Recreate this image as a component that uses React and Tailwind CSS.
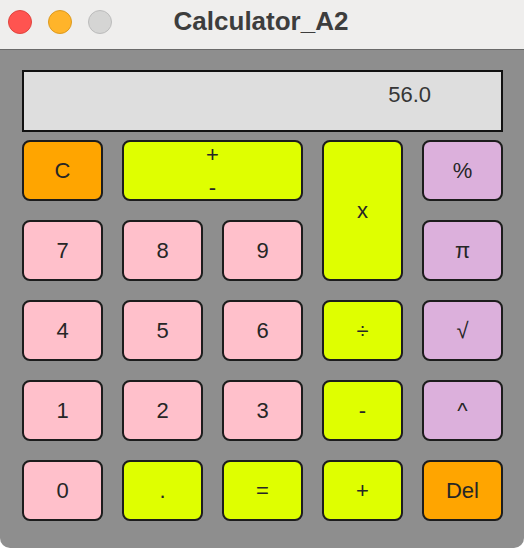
import React from "react";

const PINK = "bg-[#ffc0cb]";
const YEL = "bg-[#dfff00]";
const ORA = "bg-[#ffa500]";
const PUR = "bg-[#dcb0dc]";

function Btn({ label, color, className = "" }) {
  return (
    <div
      className={`${color} ${className} flex items-center justify-center rounded-[8px] border-2 border-[#1c1c1c] text-[22px] text-[#262626]`}
    >
      {label}
    </div>
  );
}

export default function App() {
  return (
    <div
      className="w-[524px] h-[548px] flex flex-col overflow-hidden rounded-b-[10px] bg-[#8e8e8e]"
      style={{ fontFamily: '"Liberation Sans", Arial, sans-serif' }}
    >
      <div className="h-[50px] shrink-0 relative flex items-center justify-center bg-[#efeeed] border-b border-[#6a6a6a]">
        <div className="absolute left-[8px] top-[10px] flex gap-[16px]">
          <div className="w-[24px] h-[24px] rounded-full bg-[#ff5450] border border-[#e0443e]" />
          <div className="w-[24px] h-[24px] rounded-full bg-[#ffb42a] border border-[#dd9a1e]" />
          <div className="w-[24px] h-[24px] rounded-full bg-[#d5d5d4] border border-[#bcbcbc]" />
        </div>
        <div className="text-[26px] font-bold text-[#3d3d3d] mt-[-6px] ml-[-2px]">Calculator_A2</div>
      </div>
      <div className="flex flex-col pl-[22px] pr-[21px] pt-[20px]">
        <div className="h-[62px] border-2 border-[#111] bg-[#dedede] text-right pr-[70px] pt-[6px] text-[22px] text-[#363636]">
          56.0
        </div>
        <div className="mt-[8px] grid grid-cols-5 auto-rows-[61px] gap-[19px]">
          <Btn label="C" color={ORA} />
          <div
            className={`${YEL} col-span-2 flex flex-col items-center justify-center rounded-[8px] border-2 border-[#1c1c1c] text-[22px] leading-[33px] text-[#262626]`}
          >
            <span>+</span>
            <span>-</span>
          </div>
          <Btn label="x" color={YEL} className="row-span-2" />
          <Btn label="%" color={PUR} />
          <Btn label="7" color={PINK} />
          <Btn label="8" color={PINK} />
          <Btn label="9" color={PINK} />
          <Btn label="π" color={PUR} />
          <Btn label="4" color={PINK} />
          <Btn label="5" color={PINK} />
          <Btn label="6" color={PINK} />
          <Btn label="÷" color={YEL} />
          <Btn label="√" color={PUR} />
          <Btn label="1" color={PINK} />
          <Btn label="2" color={PINK} />
          <Btn label="3" color={PINK} />
          <Btn label="-" color={YEL} />
          <Btn label="^" color={PUR} />
          <Btn label="0" color={PINK} />
          <Btn label="." color={YEL} />
          <Btn label="=" color={YEL} />
          <Btn label="+" color={YEL} />
          <Btn label="Del" color={ORA} />
        </div>
      </div>
    </div>
  );
}
